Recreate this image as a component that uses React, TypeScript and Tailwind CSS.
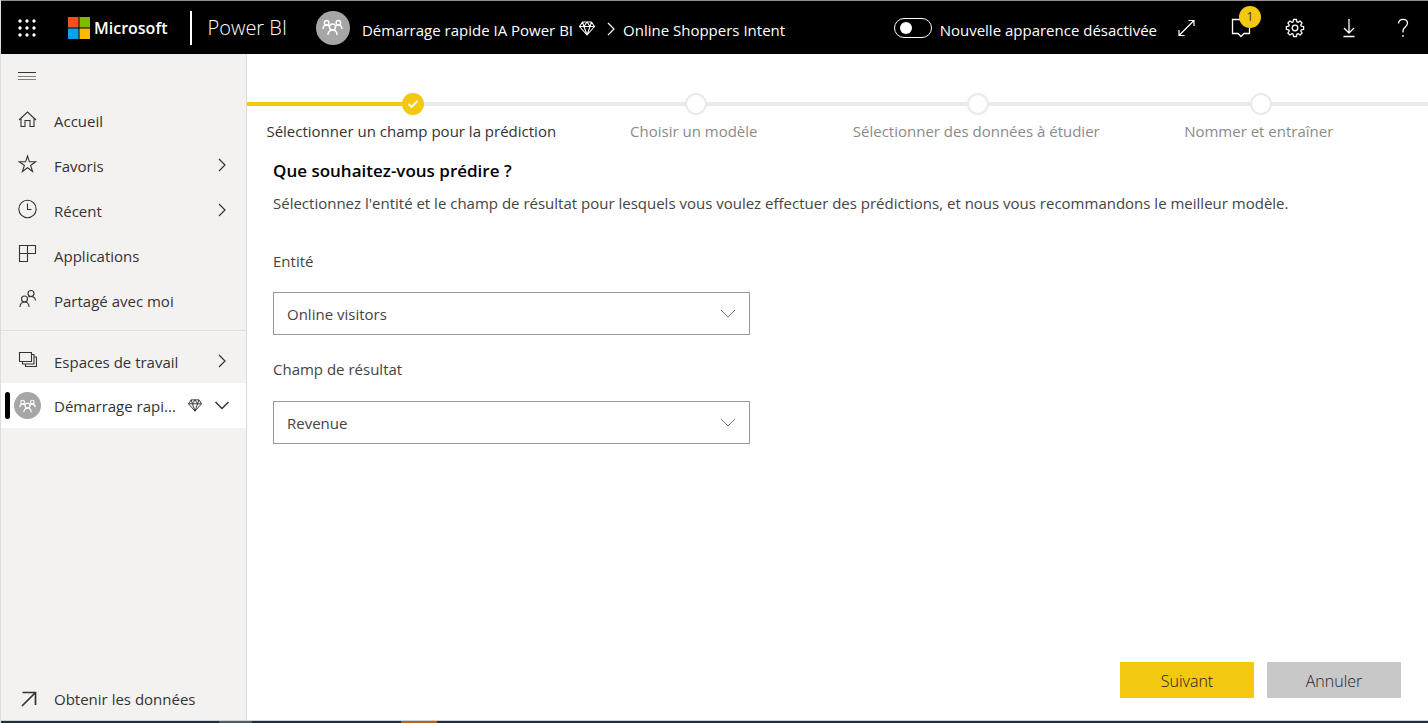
import { useState, type ReactNode } from "react";

type IconProps = { className?: string };

function PeopleIcon({ className }: IconProps) {
  return (
    <svg viewBox="0 0 22 18" fill="none" stroke="currentColor" strokeWidth="1.5" className={className} aria-hidden="true">
      <circle cx="4.8" cy="4" r="2.400" />
      <circle cx="17.2" cy="4" r="2.400" />
      <circle cx="11" cy="8.500" r="3.200" />
      <path d="M1 10.500C1 8 2.500 6.500 4.800 6.500c1.500 0 2.500.6 3.200 1.500M21 10.500c0-2.500-1.500-4-3.800-4-1.500 0-2.500.6-3.200 1.500M6.200 17c0-3 1.800-5.300 4.800-5.300s4.800 2.300 4.800 5.300" />
    </svg>
  );
}

function DiamondIcon({ className }: IconProps) {
  return (
    <svg viewBox="0 0 16 15" fill="none" stroke="currentColor" strokeWidth="1.1" strokeLinejoin="round" className={className} aria-hidden="true">
      <path d="M3.500 1h9L15.500 5.500 8 14 .5 5.500zM.5 5.500h15M5 5.500 8 1l3 4.500L8 14zM3.500 1 5 5.500M12.500 1 11 5.500" />
    </svg>
  );
}

function Chevron({ className }: IconProps) {
  return (
    <svg viewBox="0 0 8 14" fill="none" stroke="currentColor" strokeWidth="1.2" className={className} aria-hidden="true">
      <path d="m1 1 6 6-6 6" />
    </svg>
  );
}

function ChevronDown({ className }: IconProps) {
  return (
    <svg viewBox="0 0 16 9" fill="none" stroke="currentColor" className={className} aria-hidden="true">
      <path d="m1 1 7 7 7-7" />
    </svg>
  );
}

function Glyph({ children }: { children: ReactNode }) {
  return (
    <svg viewBox="0 0 20 20" fill="none" stroke="currentColor" strokeWidth="1.1" className="size-5" aria-hidden="true">
      {children}
    </svg>
  );
}

const mainLinks = [
  { label: "Accueil", more: false, icon: <path d="M2 11 10.500 3l8.500 8M4 9.200v8.300h4v-6h5v6h4V9.200" /> },
  { label: "Favoris", more: true, icon: <path d="m10.500 2 1.900 5.800h6.300l-5.100 3.700 2 6-5.100-3.700-5.100 3.700 2-6-5.100-3.700h6.300z" /> },
  {
    label: "Récent",
    more: true,
    icon: (
      <>
        <circle cx="10.500" cy="10" r="8.700" />
        <path d="M10.500 4.500v6h4" />
      </>
    ),
  },
  { label: "Applications", more: false, icon: <path d="M2.500 1.500h16v8h-16zM10.500 1.500v16h-8v-8" /> },
  {
    label: "Partagé avec moi",
    more: false,
    icon: (
      <>
        <circle cx="14" cy="4.500" r="3" />
        <circle cx="7.500" cy="10" r="3" />
        <path d="M11.300 8.100c.8-.4 1.700-.6 2.700-.6 2.500 0 4.200 1.500 4.500 4M3 18c0-3 1.700-5 4.500-5s4.500 2 4.500 5" />
      </>
    ),
  },
];

const steps = [
  "Sélectionner un champ pour la prédiction",
  "Choisir un modèle",
  "Sélectionner des données à étudier",
  "Nommer et entraîner",
];

function NavLink({ label, icon, more }: { label: string; icon: ReactNode; more: boolean }) {
  return (
    <a href="#" className="flex h-11 items-center pr-5 pl-4">
      <span className="mr-[17px] pb-0.5">
        <Glyph>{icon}</Glyph>
      </span>
      <span className="grow pt-0.5">{label}</span>
      {more && <Chevron className="h-[14px] w-2" />}
    </a>
  );
}

function Header() {
  const [newLook, setNewLook] = useState(false);
  return (
    <header className="flex h-[54px] shrink-0 items-center border-t border-[#8f8f8f] bg-black text-white">
      <button type="button" aria-label="Lanceur d’applications" className="ml-[17px]">
        <svg viewBox="0 0 18 18" fill="currentColor" className="size-[18px]" aria-hidden="true">
          {[2, 9, 16].map((y) => [2, 9, 16].map((x) => <circle key={`${x}-${y}`} cx={x} cy={y} r="1.700" />))}
        </svg>
      </button>
      <a href="#" className="ml-8 flex items-center gap-1">
        <svg viewBox="0 0 22 22" className="size-[22px]" aria-hidden="true">
          <path fill="#f25022" d="M0 0h10.500v10.500H0z" />
          <path fill="#7fba00" d="M11.500 0H22v10.500H11.500z" />
          <path fill="#00a4ef" d="M0 11.500h10.500V22H0z" />
          <path fill="#ffb900" d="M11.500 11.500H22V22H11.500z" />
        </svg>
        <span className="text-[16px] font-semibold">Microsoft</span>
      </a>
      <div className="ml-[22px] h-[34px] w-0.5 bg-white" />
      <a href="#" className="ml-4 text-[20px] font-light">
        Power BI
      </a>
      <span className="ml-[29px] flex size-[34px] items-center justify-center rounded-full bg-[#a6a6a6]">
        <PeopleIcon className="h-[17px] w-[21px]" />
      </span>
      <nav aria-label="Fil d’Ariane" className="ml-3 flex items-center pt-1.5 text-[15px]">
        <a href="#">Démarrage rapide IA Power BI</a>
        <DiamondIcon className="mb-1 ml-1.5 h-[15px] w-4" />
        <Chevron className="mr-2 mb-1 ml-3 h-[14px] w-2" />
        <a href="#">Online Shoppers Intent</a>
      </nav>
      <label className="ml-auto flex items-center gap-2">
        <input
          type="checkbox"
          role="switch"
          checked={newLook}
          onChange={(e) => setNewLook(e.target.checked)}
          className="peer sr-only"
        />
        <span className="flex h-5 w-[38px] items-center rounded-full border border-white px-[5px] peer-checked:justify-end">
          <span className="size-3 rounded-full bg-white" />
        </span>
        <span className="pt-1.5 text-[15px]">Nouvelle apparence désactivée</span>
      </label>
      <div className="mr-[15px] ml-5 flex items-center gap-[34px]">
        <button type="button" aria-label="Plein écran">
          <svg viewBox="0 0 20 20" fill="none" stroke="currentColor" strokeWidth="1.2" className="size-5" aria-hidden="true">
            <path d="M2 17.500 17 2.500M11.500 2.500H17V8M2 12v5.500h5.500" />
          </svg>
        </button>
        <button type="button" aria-label="Notifications" className="relative">
          <svg viewBox="0 0 20 20" fill="none" stroke="currentColor" strokeWidth="1.300" className="size-5" aria-hidden="true">
            <path d="M1.500 1.500h17V15.500H13L10 18.500 7 15.500H1.500z" />
          </svg>
          <span className="absolute -top-3 left-2 flex size-[22px] items-center justify-center rounded-full bg-[#f2c811] text-xs text-[#333]">
            1
          </span>
        </button>
        <button type="button" aria-label="Paramètres">
          <svg viewBox="0 0 20 20" fill="none" stroke="currentColor" strokeWidth="1.300" strokeLinejoin="round" className="size-5" aria-hidden="true">
            <circle cx="10" cy="10" r="2.800" />
            <path d="M8.500 1.500h3l.4 2.300 1.300.5 1.900-1.300 2 2-1.300 1.900.5 1.300 2.300.4v2.800l-2.300.4-.5 1.300 1.300 1.900-2 2-1.900-1.300-1.300.5-.4 2.300h-3l-.4-2.300-1.300-.5-1.900 1.300-2-2 1.300-1.900-.5-1.300-2.300-.4V8.600l2.300-.4.5-1.300-1.300-1.900 2-2 1.900 1.300 1.300-.5z" />
          </svg>
        </button>
        <button type="button" aria-label="Télécharger">
          <svg viewBox="0 0 20 20" fill="none" stroke="currentColor" strokeWidth="1.300" className="size-5" aria-hidden="true">
            <path d="M10 1v14M5 10l5 5 5-5M4.500 18.500h11" />
          </svg>
        </button>
        <button type="button" aria-label="Aide">
          <svg viewBox="0 0 20 20" fill="none" stroke="currentColor" strokeWidth="1.300" className="size-5" aria-hidden="true">
            <path d="M5.500 5.500C5.800 2.800 7.500 1.300 10 1.300c2.700 0 4.500 1.500 4.500 4C14.500 9 10 9 10 13v1.500M10 17v2" />
          </svg>
        </button>
      </div>
    </header>
  );
}

function Sidebar() {
  return (
    <aside className="flex w-[246px] shrink-0 flex-col border-r border-[#dcdad8] bg-[#f3f2f1] text-[15px] text-[#333]">
      <button type="button" aria-label="Menu" className="flex h-11 items-center pl-[17px]">
        <svg viewBox="0 0 18 10" stroke="currentColor" className="h-[10px] w-[18px]" aria-hidden="true">
          <path d="M0 1.500h18" />
          <path d="M0 5.500h18M0 8.500h18" strokeOpacity="0.6" />
        </svg>
      </button>
      <nav className="flex grow flex-col">
        <div className="flex flex-col gap-px pb-2">
          {mainLinks.map((l) => (
            <NavLink key={l.label} {...l} />
          ))}
        </div>
        <div className="mb-2 border-t border-[#e1dfdd]" />
        <NavLink
          label="Espaces de travail"
          more
          icon={<path d="M2.500 2.500h12v9h-12zM14.500 4.500h2.500v9.500H5.500v-2.500M17 7h2.500v9.500H8.500V14" />}
        />
        <a href="#" aria-current="page" className="flex h-[45px] items-center bg-white pr-4 pl-1">
          <span className="mr-1 h-[27px] w-[5px] rounded-full bg-black" />
          <span className="mr-[13px] flex size-[27px] items-center justify-center rounded-full bg-[#a6a6a6] text-white">
            <PeopleIcon className="h-[14px] w-[17px]" />
          </span>
          <span className="grow pt-0.5 whitespace-nowrap">Démarrage rapi...</span>
          <DiamondIcon className="h-[13px] w-[14px]" />
          <svg viewBox="0 0 16 9" fill="none" stroke="currentColor" strokeWidth="1.5" className="ml-3 h-[9px] w-4" aria-hidden="true">
            <path d="m1.500 1 6.500 6.500L14.500 1" />
          </svg>
        </a>
        <a href="#" className="mt-auto flex h-11 items-center pl-4">
          <svg viewBox="0 0 20 20" fill="none" stroke="currentColor" strokeWidth="1.700" className="mr-[17px] size-5" aria-hidden="true">
            <path d="M5 18 18 5M5.500 4.500H18.500V17" />
          </svg>
          <span className="pt-0.5">Obtenir les données</span>
        </a>
      </nav>
    </aside>
  );
}

function Stepper() {
  return (
    <div className="grid">
      <div className="col-start-1 row-start-1 flex h-[22px] items-center" aria-hidden="true">
        <div className="h-1 w-[25px] bg-[#f2c811]" />
        <div className="h-1 grow basis-0 bg-[#f2c811]" />
        <div className="h-1 grow-7 basis-0 bg-[#eaeaea]" />
        <div className="h-1 w-[26px] bg-[#eaeaea]" />
      </div>
      <ol className="col-start-1 row-start-1 grid grid-cols-4 pr-[26px] pl-[25px] text-[15px]">
        {steps.map((s, i) => (
          <li key={s} className="flex flex-col items-center gap-[5px] whitespace-nowrap">
            {i === 0 ? (
              <span className="flex size-[22px] items-center justify-center rounded-full bg-[#f2c811]">
                <svg viewBox="0 0 12 10" fill="none" stroke="#fff" strokeWidth="1.800" className="h-2.5 w-3" aria-hidden="true">
                  <path d="m1.500 5 3 3 6-6" />
                </svg>
              </span>
            ) : (
              <span className="size-[22px] rounded-full border-2 border-[#eaeaea] bg-white" />
            )}
            <span className={i === 0 ? "pr-1 font-medium text-[#333]" : "pr-1 text-[#8a8a8a]"}>{s}</span>
          </li>
        ))}
      </ol>
    </div>
  );
}

function Field({ id, label, options }: { id: string; label: string; options: string[] }) {
  return (
    <div className="flex flex-col gap-5">
      <label htmlFor={id} className="font-medium">
        {label}
      </label>
      <div className="grid items-center">
        <select
          id={id}
          className="col-start-1 row-start-1 h-[43px] appearance-none border border-[#999] bg-white pt-0.5 pr-10 pl-[13px]"
        >
          {options.map((o) => (
            <option key={o}>{o}</option>
          ))}
        </select>
        <ChevronDown className="pointer-events-none col-start-1 row-start-1 mr-3.5 h-[9px] w-4 justify-self-end text-[#777]" />
      </div>
    </div>
  );
}

export default function App() {
  return (
    <div className="flex min-h-screen flex-col border-l border-[#dcdcdc] bg-white font-['Open_Sans',sans-serif]">
      <Header />
      <div className="flex grow">
        <Sidebar />
        <main className="flex grow flex-col pt-[39px]">
          <Stepper />
          <div className="px-[26px] pt-[15px] text-[15px] text-[#444]">
            <h1 className="text-[17px] font-semibold text-black">Que souhaitez-vous prédire ?</h1>
            <p className="mt-[9px]">
              Sélectionnez l'entité et le champ de résultat pour lesquels vous voulez effectuer des prédictions, et nous
              vous recommandons le meilleur modèle.
            </p>
            <form className="mt-[35px] flex max-w-[477px] flex-col gap-[23px]">
              <Field id="entity" label="Entité" options={["Online visitors"]} />
              <Field id="outcome" label="Champ de résultat" options={["Revenue"]} />
            </form>
          </div>
          <div className="mt-auto flex justify-end gap-[13px] pr-[27px] pb-[22px] text-[16px] font-light text-[#222]">
            <button type="button" className="h-9 w-[134px] bg-[#f2c811] pt-0.5">
              Suivant
            </button>
            <button type="button" className="h-9 w-[134px] bg-[#c8c8c8] pt-0.5">
              Annuler
            </button>
          </div>
        </main>
      </div>
      <div className="flex h-[3px] border-t border-[#d0d0d0] bg-[#1d2f40]" aria-hidden="true">
        <div className="ml-[218px] w-[33px] bg-[#4d5a64]" />
        <div className="ml-[149px] w-9 bg-[#a8652f]" />
      </div>
    </div>
  );
}
